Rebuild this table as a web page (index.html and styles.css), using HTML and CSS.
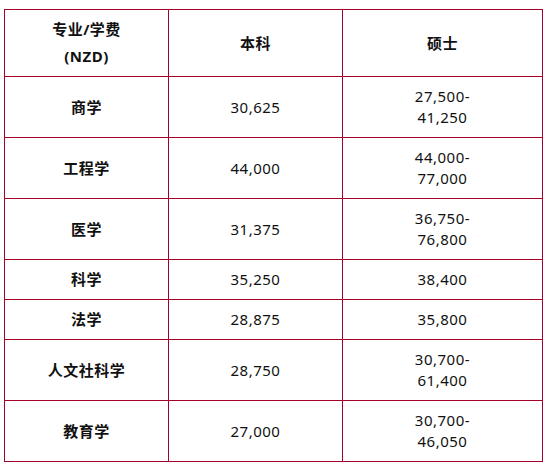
FILE: index.html
```html
<!DOCTYPE html>
<html lang="zh-CN">
<head>
<meta charset="utf-8">
<title>专业学费</title>
<link rel="stylesheet" href="styles.css">
</head>
<body>
<table class="fees">
  <colgroup>
    <col class="c1"><col class="c2"><col class="c3">
  </colgroup>
  <thead>
    <tr class="head">
      <th>专业/学费<br>(NZD)</th>
      <th>本科</th>
      <th>硕士</th>
    </tr>
  </thead>
  <tbody>
    <tr><th>商学</th><td>30,625</td><td>27,500-<br>41,250</td></tr>
    <tr><th>工程学</th><td>44,000</td><td>44,000-<br>77,000</td></tr>
    <tr><th>医学</th><td>31,375</td><td>36,750-<br>76,800</td></tr>
    <tr><th>科学</th><td>35,250</td><td>38,400</td></tr>
    <tr><th>法学</th><td>28,875</td><td>35,800</td></tr>
    <tr><th>人文社科学</th><td>28,750</td><td>30,700-<br>61,400</td></tr>
    <tr><th>教育学</th><td>27,000</td><td>30,700-<br>46,050</td></tr>
  </tbody>
</table>
</body>
</html>
```
FILE: styles.css
```css
html, body {
  margin: 0;
  padding: 0;
  background: #ffffff;
}
body {
  padding: 9px 0 0 4px;
  font-family: "Noto Sans", "Noto Sans CJK SC", sans-serif;
  font-size: 15px;
  color: #111111;
}
.fees {
  border-collapse: collapse;
  table-layout: fixed;
  width: 538px;
}
.c1 { width: 164px; }
.c2 { width: 174px; }
.c3 { width: 200px; }
.fees th,
.fees td {
  border: 1px solid #a5002a;
  text-align: center;
  vertical-align: middle;
  padding: 9px 4px;
  line-height: 21px;
  letter-spacing: 0.5px;
}
.fees th {
  font-weight: bold;
}
.fees td {
  font-weight: normal;
}
.fees .head th {
  padding: 6px 4px;
  line-height: 27px;
}
```
